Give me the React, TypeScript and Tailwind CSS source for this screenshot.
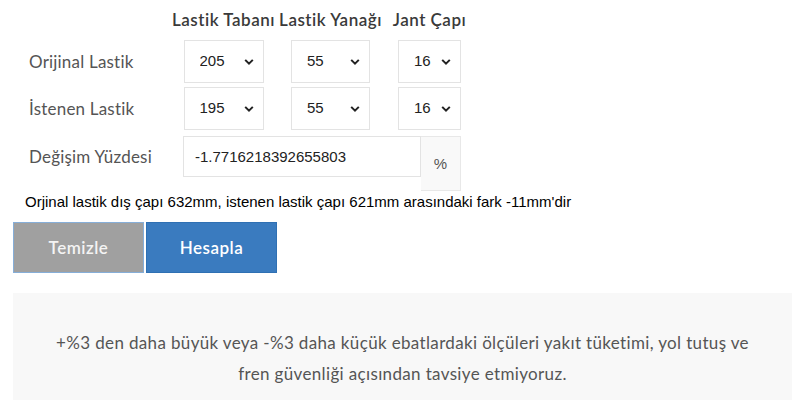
import React, { useState } from 'react';

const lato = "font-['Lato','Open_Sans',sans-serif]";
const arial = "font-['Liberation_Sans',Arial,sans-serif]";

const Chevron = () => (
    <svg className="pointer-events-none absolute right-[10px] top-1/2 -translate-y-1/2" width="10" height="7" viewBox="0 0 10 7">
        <path d="M1.2 1.4 L5 5.2 L8.8 1.4" fill="none" stroke="#222" strokeWidth="2" />
    </svg>
);

interface SizeSelectProps {
    value: string;
    options: string[];
    width: string;
    onChange: (v: string) => void;
}

const SizeSelect: React.FC<SizeSelectProps> = ({ value, options, width, onChange }) => (
    <div className={`relative h-[43px] ${width}`}>
        <select
            value={value}
            onChange={e => onChange(e.target.value)}
            className={`h-full w-full appearance-none border border-[#e3e3e3] bg-white pl-[15px] text-[15px] text-[#222] outline-none ${arial}`}
        >
            {options.map(o => <option key={o} value={o}>{o}</option>)}
        </select>
        <Chevron />
    </div>
);

const widths = ['135', '145', '155', '165', '175', '185', '195', '205', '215', '225', '235', '245', '255', '265', '275'];
const ratios = ['30', '35', '40', '45', '50', '55', '60', '65', '70', '75', '80'];
const rims = ['13', '14', '15', '16', '17', '18', '19', '20'];

export default function App() {
    const [orig, setOrig] = useState({ w: '205', r: '55', d: '16' });
    const [want, setWant] = useState({ w: '195', r: '55', d: '16' });

    const labelCls = `pl-[29px] text-[17px] tracking-[0.2px] text-[#555] ${lato}`;
    const headCls = `text-center text-[17px] font-semibold tracking-[0.5px] text-[#3a3a3a] whitespace-nowrap ${lato}`;

    return (
        <div className="h-[400px] w-[792px] overflow-hidden bg-white">
            <div className="grid h-[40px] grid-cols-[172px_103px_111px_87px] items-center">
                <div />
                <div className={headCls}>Lastik Tabanı</div>
                <div className={headCls}>Lastik Yanağı</div>
                <div className={headCls}>Jant Çapı</div>
            </div>

            <div className="grid grid-cols-[172px_103px_111px_87px] items-center">
                <div className={labelCls}>Orijinal Lastik</div>
                <div className="flex justify-center"><SizeSelect value={orig.w} options={widths} width="w-[80px]" onChange={v => setOrig(p => ({ ...p, w: v }))} /></div>
                <div className="flex justify-center"><SizeSelect value={orig.r} options={ratios} width="w-[79px]" onChange={v => setOrig(p => ({ ...p, r: v }))} /></div>
                <div className="flex justify-center"><SizeSelect value={orig.d} options={rims} width="w-[63px]" onChange={v => setOrig(p => ({ ...p, d: v }))} /></div>
            </div>

            <div className="mt-[4px] grid grid-cols-[172px_103px_111px_87px] items-center">
                <div className={labelCls}>İstenen Lastik</div>
                <div className="flex justify-center"><SizeSelect value={want.w} options={widths} width="w-[80px]" onChange={v => setWant(p => ({ ...p, w: v }))} /></div>
                <div className="flex justify-center"><SizeSelect value={want.r} options={ratios} width="w-[79px]" onChange={v => setWant(p => ({ ...p, r: v }))} /></div>
                <div className="flex justify-center"><SizeSelect value={want.d} options={rims} width="w-[63px]" onChange={v => setWant(p => ({ ...p, d: v }))} /></div>
            </div>

            <div className="mt-[6px] flex items-start">
                <div className={`${labelCls} flex h-[41px] w-[183px] items-center`}>Değişim Yüzdesi</div>
                <input
                    readOnly
                    value="-1.7716218392655803"
                    className={`h-[41px] w-[238px] border border-[#e3e3e3] bg-white pl-[11px] text-[15px] text-[#222] outline-none ${arial}`}
                />
                <div className={`flex h-[55px] w-[40px] items-center justify-center border border-l-0 border-[#e8e8e8] bg-[#f9f9f9] pt-[2px] text-[15px] text-[#555] ${arial}`}>%</div>
            </div>

            <p className={`mt-[1px] h-[20px] pl-[25px] text-[15px] leading-[20px] text-black ${arial}`}>
                Orjinal lastik dış çapı 632mm, istenen lastik çapı 621mm arasındaki fark -11mm'dir
            </p>

            <div className="mt-[10px] flex gap-[2px] pl-[13px]">
                <button className={`h-[51px] w-[131px] border border-[#86aed8] bg-[#a0a0a0] text-[17px] font-semibold tracking-[0.5px] text-[#f4f4f4] ${lato}`}>Temizle</button>
                <button className={`h-[51px] w-[131px] border border-[#2f70b3] bg-[#3a7bbf] text-[17px] font-semibold tracking-[0.5px] text-white ${lato}`}>Hesapla</button>
            </div>

            <div className={`ml-[13px] mt-[20px] bg-[#f8f8f8] px-[40px] pb-[30px] pt-[34px] text-center text-[17px] leading-[31px] tracking-[0.35px] text-[#555] ${lato}`}>
                +%3 den daha büyük veya -%3 daha küçük ebatlardaki ölçüleri yakıt tüketimi, yol tutuş ve fren güvenliği açısından tavsiye etmiyoruz.
            </div>
        </div>
    );
}
